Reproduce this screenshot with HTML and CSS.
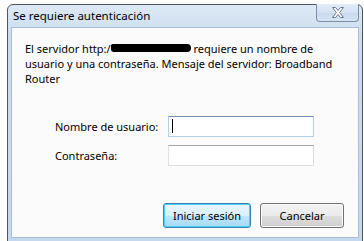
FILE: index.html
```html
<!DOCTYPE html>
<html lang="es">
<head>
<meta charset="utf-8">
<title>Se requiere autenticación</title>
<link rel="stylesheet" href="styles.css">
</head>
<body>
<div class="window">
  <div class="titlebar">
    <span class="title">Se requiere autenticación</span>
    <button class="close" aria-label="Cerrar">
      <svg width="14" height="11" viewBox="0 0 14 11">
        <path d="M1.5 0.5 H4.5 L7 3.5 L9.5 0.5 H12.5 L8.6 5.5 L12.5 10.5 H9.5 L7 7.5 L4.5 10.5 H1.5 L5.4 5.5 Z" fill="#ffffff" stroke="#6b7a8f" stroke-width="1" stroke-linejoin="round"/>
      </svg>
    </button>
  </div>
  <div class="client">
    <p class="message">El servidor http:/<span class="redacted"></span> requiere un nombre de usuario y una contraseña. Mensaje del servidor: Broadband Router</p>
    <div class="form">
      <label class="label" for="user">Nombre de usuario:</label>
      <div class="field focused"><span class="caret"></span></div>
      <label class="label" for="pass">Contraseña:</label>
      <div class="field"></div>
    </div>
    <div class="buttons">
      <button class="btn default">Iniciar sesión</button>
      <button class="btn cancel">Cancelar</button>
    </div>
  </div>
</div>
</body>
</html>
```

FILE: styles.css
```css
* { box-sizing: border-box; }
html, body { margin: 0; padding: 0; background: #ffffff; }
body {
  width: 364px;
  height: 241px;
  overflow: hidden;
  font-family: "Noto Sans", "Open Sans", sans-serif;
  font-size: 11px;
  color: #000;
}
.window {
  margin: 4px 1px 0 7px;
  width: 356px;
  border: 1px solid #4e5561;
  border-radius: 6px 6px 0 0;
  background: linear-gradient(#dde9f6, #cddcee 30px, #c6d8ed);
  padding: 0 3px 3px 3px;
}
.titlebar {
  height: 22px;
  display: flex;
  align-items: flex-start;
  justify-content: space-between;
}
.title {
  padding-left: 2px;
  padding-top: 3px;
  line-height: 15px;
  font-size: 11.5px;
}
.close {
  width: 43px;
  height: 18px;
  margin-top: -1px;
  margin-right: 0;
  padding: 0;
  border: 1px solid #7d8ea6;
  border-top: none;
  border-radius: 0 0 4px 4px;
  background: linear-gradient(#e4edf8, #d3e1f1 50%, #c8d9ee 51%, #d6e4f4);
  display: flex;
  align-items: center;
  justify-content: center;
}
.close svg { display: block; }
.client {
  height: 211px;
  border: 1px solid #a9bdd8;
  background: #fbfbfb;
  display: flex;
  flex-direction: column;
}
.message {
  margin: 0;
  padding: 13px 10px 0 13px;
  line-height: 15px;
}
.redacted {
  display: inline-block;
  width: 80px;
  height: 8px;
  background: #000;
  border-radius: 2px 5px 5px 3px;
  vertical-align: 1px;
}
.form {
  margin-top: 30px;
  padding-left: 43px;
  display: grid;
  grid-template-columns: 113px 146px;
  grid-auto-rows: 21px;
  row-gap: 8px;
  align-items: center;
}
.label { line-height: 15px; }
.field {
  height: 21px;
  background: #fff;
  border: 1px solid #dcdfe3;
  border-top-color: #a7a7a7;
  position: relative;
}
.field.focused {
  border-color: #b5cfe7;
  border-top-color: #6f8fb0;
}
.caret {
  position: absolute;
  left: 3px;
  top: 2px;
  width: 1px;
  height: 14px;
  background: #000;
}
.buttons {
  margin-top: 37px;
  display: flex;
  justify-content: flex-end;
  gap: 9px;
  padding-right: 14px;
}
.btn {
  height: 25px;
  padding: 0;
  font-family: inherit;
  font-size: 11px;
  color: #000;
  border: 1px solid #707070;
  border-radius: 3px;
  background: linear-gradient(#f2f2f2, #ebebeb 50%, #dddddd 51%, #cfcfcf);
  box-shadow: inset 0 0 0 1px #fcfcfc;
}
.btn.default {
  width: 88px;
  border-color: #3c7fb1;
  background: linear-gradient(#eaf6fd, #d9f0fc 50%, #bee6fd 51%, #a7d9f5);
  box-shadow: inset 0 0 0 1px #48d0fb;
}
.btn.cancel { width: 84px; }
```
